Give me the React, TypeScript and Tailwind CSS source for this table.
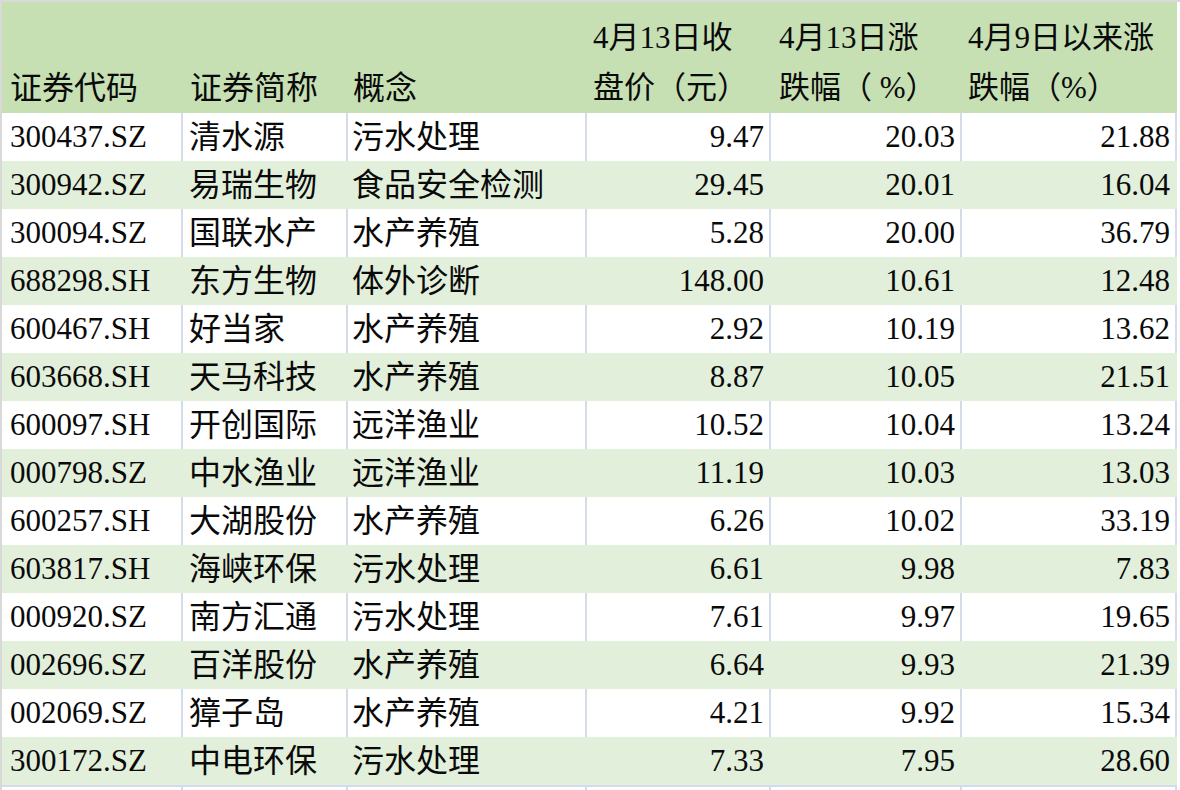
import React from "react";

const rows: [string, string, string, string, string, string][] = [
  ["300437.SZ", "清水源", "污水处理", "9.47", "20.03", "21.88"],
  ["300942.SZ", "易瑞生物", "食品安全检测", "29.45", "20.01", "16.04"],
  ["300094.SZ", "国联水产", "水产养殖", "5.28", "20.00", "36.79"],
  ["688298.SH", "东方生物", "体外诊断", "148.00", "10.61", "12.48"],
  ["600467.SH", "好当家", "水产养殖", "2.92", "10.19", "13.62"],
  ["603668.SH", "天马科技", "水产养殖", "8.87", "10.05", "21.51"],
  ["600097.SH", "开创国际", "远洋渔业", "10.52", "10.04", "13.24"],
  ["000798.SZ", "中水渔业", "远洋渔业", "11.19", "10.03", "13.03"],
  ["600257.SH", "大湖股份", "水产养殖", "6.26", "10.02", "33.19"],
  ["603817.SH", "海峡环保", "污水处理", "6.61", "9.98", "7.83"],
  ["000920.SZ", "南方汇通", "污水处理", "7.61", "9.97", "19.65"],
  ["002696.SZ", "百洋股份", "水产养殖", "6.64", "9.93", "21.39"],
  ["002069.SZ", "獐子岛", "水产养殖", "4.21", "9.92", "15.34"],
  ["300172.SZ", "中电环保", "污水处理", "7.33", "7.95", "28.60"],
];

const cols = "grid grid-cols-[181px_165px_239px_184px_191px_215px]";
const font = { fontFamily: '"Liberation Serif", "Noto Sans CJK SC", serif' };

export default function App() {
  return (
    <div
      className="w-[1180px] h-[790px] overflow-hidden bg-white text-[31px] text-[#0a0a0a]"
      style={font}
    >
      <div className="h-[2px] bg-[#d9d9d9]" />
      <div className="flex">
        <div className="w-[2px] bg-[#d9d9d9] shrink-0" />
        <div className="flex flex-col">
          {/* header */}
          <div className={`${cols} h-[111px] bg-[#c6e0b4]`}>
            <div className="flex flex-col justify-end pl-[8px] leading-[50px] text-[32px]">证券代码</div>
            <div className="flex flex-col justify-end pl-[7px] leading-[50px] text-[32px]">证券简称</div>
            <div className="flex flex-col justify-end pl-[5px] leading-[50px] text-[32px]">概念</div>
            <div className="flex flex-col justify-end pl-[6px] leading-[50px]">
              <span>4月13日收</span>
              <span>盘价（元）</span>
            </div>
            <div className="flex flex-col justify-end pl-[8px] leading-[50px]">
              <span>4月13日涨</span>
              <span>跌幅（ %）</span>
            </div>
            <div className="flex flex-col justify-end pl-[6px] leading-[50px]">
              <span>4月9日以来涨</span>
              <span>跌幅（%）</span>
            </div>
          </div>
          {rows.map((r, i) => {
            const green = i % 2 === 1;
            const bd = green ? "border-r-2 border-transparent" : "border-r-2 border-[#d5dbe8]";
            return (
              <div
                key={r[0]}
                className={`${cols} h-[48px] leading-[48px] ${green ? "bg-[#e2efda]" : "bg-white"}`}
              >
                <div className={`${bd} pl-[8px] whitespace-nowrap`}>{r[0]}</div>
                <div className={`${bd} pl-[6px] whitespace-nowrap text-[32px]`}>{r[1]}</div>
                <div className={`${bd} pl-[4px] whitespace-nowrap text-[32px]`}>{r[2]}</div>
                <div className={`${bd} pr-[5px] text-right`}>{r[3]}</div>
                <div className={`${bd} pr-[5px] text-right`}>{r[4]}</div>
                <div className={`${bd} pr-[5px] text-right`}>{r[5]}</div>
              </div>
            );
          })}
          <div className={`${cols} h-[48px] bg-white border-t-2 border-[#d5dbe8]`}>
            {[0, 1, 2, 3, 4, 5].map((k) => (
              <div key={k} className="border-r-2 border-[#d5dbe8]" />
            ))}
          </div>
        </div>
      </div>
    </div>
  );
}
